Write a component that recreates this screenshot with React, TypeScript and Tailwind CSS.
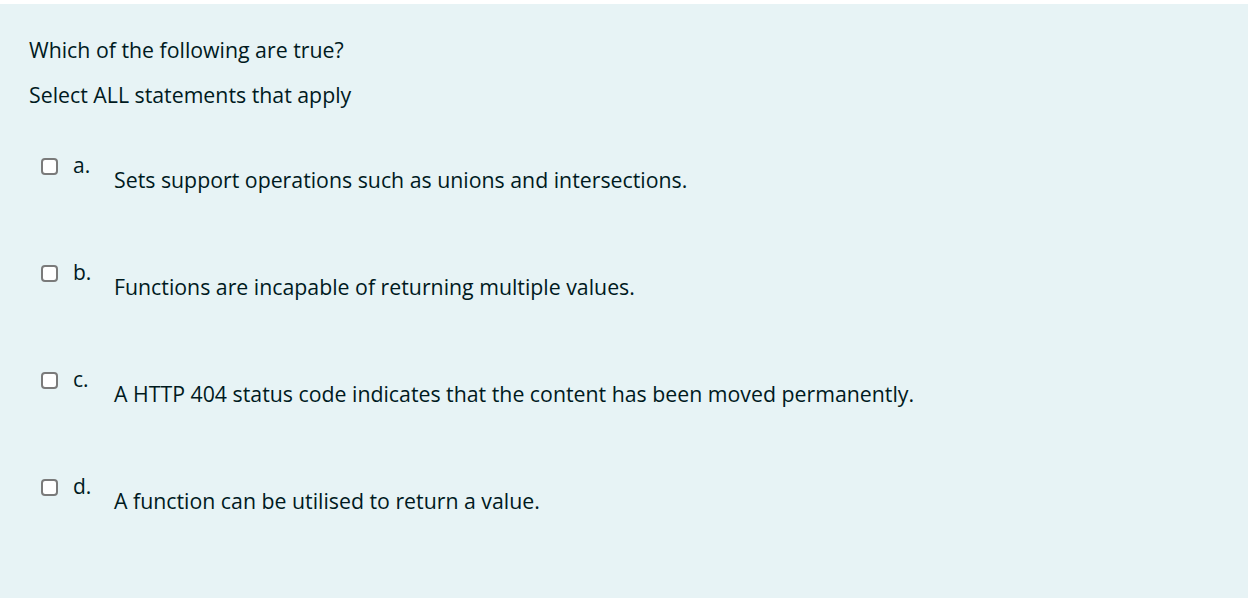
import React from "react";

const options = [
  { l: "a.", t: "Sets support operations such as unions and intersections." },
  { l: "b.", t: "Functions are incapable of returning multiple values." },
  { l: "c.", t: "A HTTP 404 status code indicates that the content has been moved permanently." },
  { l: "d.", t: "A function can be utilised to return a value." },
];

export default function App() {
  return (
    <div className="w-[1251px] h-[598px] bg-white pt-[4px] pr-[3px]" style={{ fontFamily: '"Open Sans", sans-serif' }}>
      <div className="h-full bg-[#e7f3f5] text-[#001a1e] pl-[29px] pt-[31px] text-[21.3px]">
        <div className="leading-[30px]">Which of the following are true?</div>
        <div className="leading-[30px] mt-[15px]">Select ALL statements that apply</div>
        <div className="mt-[47px] flex flex-col">
          {options.map((o) => (
            <div key={o.l} className="flex h-[107px]">
              <div className="ml-[12px] mt-[1px] w-[17px] h-[17px] border-2 border-[#7a7a7a] rounded-[4px] bg-white" />
              <div className="ml-[15px] w-[41px] text-[21px] leading-[20px] -mt-[2px]">{o.l}</div>
              <div className="mt-[8px] leading-[30px]">{o.t}</div>
            </div>
          ))}
        </div>
      </div>
    </div>
  );
}
